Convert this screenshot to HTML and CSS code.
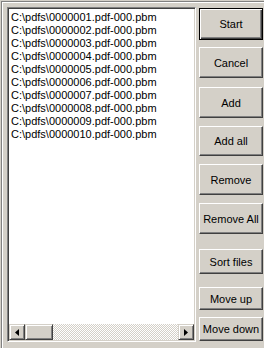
FILE: index.html
```html
<!DOCTYPE html>
<html lang="en">

<head>
    <meta charset="UTF-8">
    <title>Files</title>
    <link rel="stylesheet" href="styles.css">
</head>

<body>
    <div class="frame">
        <div class="listbox">
            <ul class="files">
                <li>C:\pdfs\0000001.pdf-000.pbm</li>
                <li>C:\pdfs\0000002.pdf-000.pbm</li>
                <li>C:\pdfs\0000003.pdf-000.pbm</li>
                <li>C:\pdfs\0000004.pdf-000.pbm</li>
                <li>C:\pdfs\0000005.pdf-000.pbm</li>
                <li>C:\pdfs\0000006.pdf-000.pbm</li>
                <li>C:\pdfs\0000007.pdf-000.pbm</li>
                <li>C:\pdfs\0000008.pdf-000.pbm</li>
                <li>C:\pdfs\0000009.pdf-000.pbm</li>
                <li>C:\pdfs\0000010.pdf-000.pbm</li>
            </ul>
            <div class="hscroll">
                <div class="arrow">
                    <svg width="4" height="7" viewBox="0 0 4 7"><path d="M4 0V7L0 3.5Z" fill="#000"/></svg>
                </div>
                <div class="thumb"></div>
                <div class="track"></div>
                <div class="arrow">
                    <svg width="4" height="7" viewBox="0 0 4 7"><path d="M0 0V7L4 3.5Z" fill="#000"/></svg>
                </div>
            </div>
        </div>

        <div class="buttons">
            <button type="button" class="btn btn-start default">Start</button>
            <button type="button" class="btn btn-cancel">Cancel</button>
            <button type="button" class="btn btn-add">Add</button>
            <button type="button" class="btn btn-addall">Add all</button>
            <button type="button" class="btn btn-remove">Remove</button>
            <button type="button" class="btn btn-removeall">Remove All</button>
            <button type="button" class="btn btn-sort">Sort files</button>
            <button type="button" class="btn btn-up">Move up</button>
            <button type="button" class="btn btn-down">Move down</button>
        </div>
    </div>
</body>

</html>
```

FILE: styles.css
```css
body {
    margin: 0;
    background: #d4d0c8;
    font-family: "Liberation Sans", Arial, sans-serif;
    font-size: 11px;
    color: #000;
}

.frame {
    display: flex;
    margin: 1px 0 0 1px;
    padding: 5px 0 0 5px;
    height: 341px;
    border-top: 1px solid #808080;
    border-left: 1px solid #808080;
    box-shadow: inset 1px 1px #fff;
}

.listbox {
    display: flex;
    flex-direction: column;
    width: 185px;
    height: 331px;
    background: #fff;
    border: 1px solid;
    border-color: #808080 #fff #fff #808080;
    box-shadow: inset 1px 1px #404040, inset -1px -1px #d4d0c8;
    padding: 1px;
}

.files {
    flex: 1;
    list-style: none;
    margin: 0;
    padding: 2px 0 0 2px;
}

.files li {
    height: 13px;
    line-height: 13px;
    white-space: nowrap;
}

.hscroll {
    display: flex;
    height: 16px;
}

.arrow,
.thumb {
    box-sizing: border-box;
    height: 16px;
    background: #d4d0c8;
    border: 1px solid;
    border-color: #d4d0c8 #404040 #404040 #d4d0c8;
    box-shadow: inset 1px 1px #fff, inset -1px -1px #808080;
}

.arrow {
    width: 16px;
    display: flex;
    align-items: center;
    justify-content: center;
}

.thumb {
    width: 28px;
}

.track {
    flex: 1;
    background: repeating-conic-gradient(#fff 0 25%, #d4d0c8 0 50%) 0 0 / 2px 2px;
}

.buttons {
    display: flex;
    flex-direction: column;
    margin-left: 3px;
}

.btn {
    box-sizing: border-box;
    width: 64px;
    padding: 0;
    font-family: inherit;
    font-size: 11px;
    color: #000;
    background: #d4d0c8;
    border: 1px solid;
    border-color: #fff #404040 #404040 #fff;
    box-shadow: inset -1px -1px #808080, inset 1px 1px #d4d0c8;
    white-space: nowrap;
}

.btn.default {
    border: 1px solid #000;
    box-shadow: inset 1px 1px #fff, inset -1px -1px #404040, inset -2px -2px #808080;
}

.btn-start { margin-top: 1px; height: 32px; }
.btn-cancel { margin-top: 7px; height: 31px; }
.btn-add { margin-top: 9px; height: 31px; }
.btn-addall { margin-top: 8px; height: 30px; }
.btn-remove { margin-top: 8px; height: 31px; }
.btn-removeall { margin-top: 8px; height: 31px; }
.btn-sort { margin-top: 15px; height: 25px; }
.btn-up { margin-top: 13px; height: 23px; }
.btn-down { margin-top: 7px; height: 24px; }
```
